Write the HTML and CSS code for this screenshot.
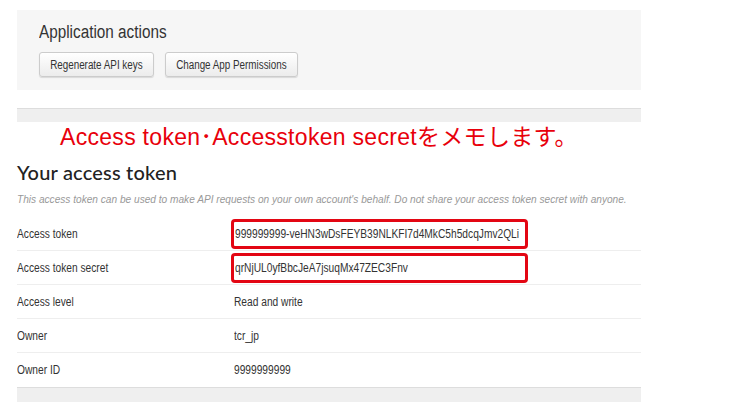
FILE: index.html
```html
<!DOCTYPE html>
<html>
<head>
<meta charset="utf-8">
<link rel="stylesheet" href="styles.css">
</head>
<body>
<div class="page">
  <section class="actions">
    <h2 class="actions-title"><span class="sq">Application actions</span></h2>
    <div class="buttons">
      <button class="btn btn-regen"><span class="sq sq-c">Regenerate API keys</span></button>
      <button class="btn btn-perm"><span class="sq sq-c">Change App Permissions</span></button>
    </div>
  </section>
  <div class="bar"></div>
  <p class="note">Access token･Accesstoken secretをメモします。</p>
  <h2 class="token-title">Your access token</h2>
  <p class="desc"><span class="sq sq-desc">This access token can be used to make API requests on your own account's behalf. Do not share your access token secret with anyone.</span></p>
  <div class="table">
    <div class="row"><span class="label"><span class="sq">Access token</span></span><span class="value"><span class="hl"><span class="sq">999999999-veHN3wDsFEYB39NLKFI7d4MkC5h5dcqJmv2QLi</span></span></span></div>
    <div class="row"><span class="label"><span class="sq">Access token secret</span></span><span class="value"><span class="hl"><span class="sq">qrNjUL0yfBbcJeA7jsuqMx47ZEC3Fnv</span></span></span></div>
    <div class="row"><span class="label"><span class="sq">Access level</span></span><span class="value"><span class="sq">Read and write</span></span></div>
    <div class="row"><span class="label"><span class="sq">Owner</span></span><span class="value"><span class="sq">tcr_jp</span></span></div>
    <div class="row"><span class="label"><span class="sq">Owner ID</span></span><span class="value"><span class="sq">9999999999</span></span></div>
  </div>
  <div class="bar bottom"></div>
</div>
</body>
</html>
```
FILE: styles.css
```css
* { box-sizing: border-box; }
html, body { margin: 0; padding: 0; background: #fff; }
body {
  font-family: "Liberation Sans", Arial, sans-serif;
  color: #333;
  width: 750px;
  height: 405px;
  overflow: hidden;
}
.sq {
  display: inline-block;
  white-space: nowrap;
  transform: scaleX(0.85);
  transform-origin: left center;
}
.sq-c { transform: scaleX(0.82); transform-origin: center center; }
.sq-desc { transform: scaleX(0.92); }
.page { padding: 10px 0 0 17px; width: 641px; }
.actions {
  background: #f6f6f6;
  height: 80px;
  padding: 11px 22px 0;
}
.actions-title {
  margin: 0;
  font-weight: normal;
  font-size: 18px;
  line-height: 22px;
  color: #333;
}
.buttons { display: flex; gap: 11px; margin-top: 9px; }
.btn {
  font-family: inherit;
  font-size: 12px;
  color: #333;
  height: 25px;
  padding: 0;
  display: flex;
  align-items: center;
  justify-content: center;
  border: 1px solid #ccc;
  border-radius: 3px;
  background: linear-gradient(#fff, #ececec);
  box-shadow: 0 1px 1px rgba(0,0,0,0.12);
  white-space: nowrap;
}
.btn-regen { width: 115px; }
.btn-perm { width: 133px; }
.bar {
  margin-top: 18px;
  height: 14px;
  border-top: 1px solid #ddd;
  background: #efefef;
}
.note {
  margin: 3px 0 0 43px;
  font-family: "Liberation Sans", "Noto Sans CJK JP", sans-serif;
  color: #e8000b;
  font-size: 23px;
  line-height: 24px;
  letter-spacing: 0.3px;
  white-space: nowrap;
}
.token-title {
  margin: 12px 0 0;
  font-family: "Lato", "Liberation Sans", sans-serif;
  font-weight: 500;
  font-size: 20px;
  line-height: 22px;
  color: #222;
  letter-spacing: 0.2px;
}
.desc {
  margin: 9px 0 0;
  font-style: italic;
  font-size: 11px;
  line-height: 14px;
  color: #999;
  white-space: nowrap;
}
.table { margin-top: 11px; }
.row {
  display: flex;
  align-items: center;
  height: 34px;
  border-bottom: 1px solid #eee;
  font-size: 12px;
  color: #333;
}
.row:last-child { border-bottom: none; }
.label { width: 217px; flex: none; }
.value { flex: 1; }
.hl {
  display: inline-block;
  margin-left: -3px;
  width: 297px;
  height: 30px;
  line-height: 24px;
  padding: 0 1px;
  border: 3px solid #e30613;
  border-radius: 4px;
  white-space: nowrap;
}
.bottom { margin-top: 0; height: 15px; }
```
